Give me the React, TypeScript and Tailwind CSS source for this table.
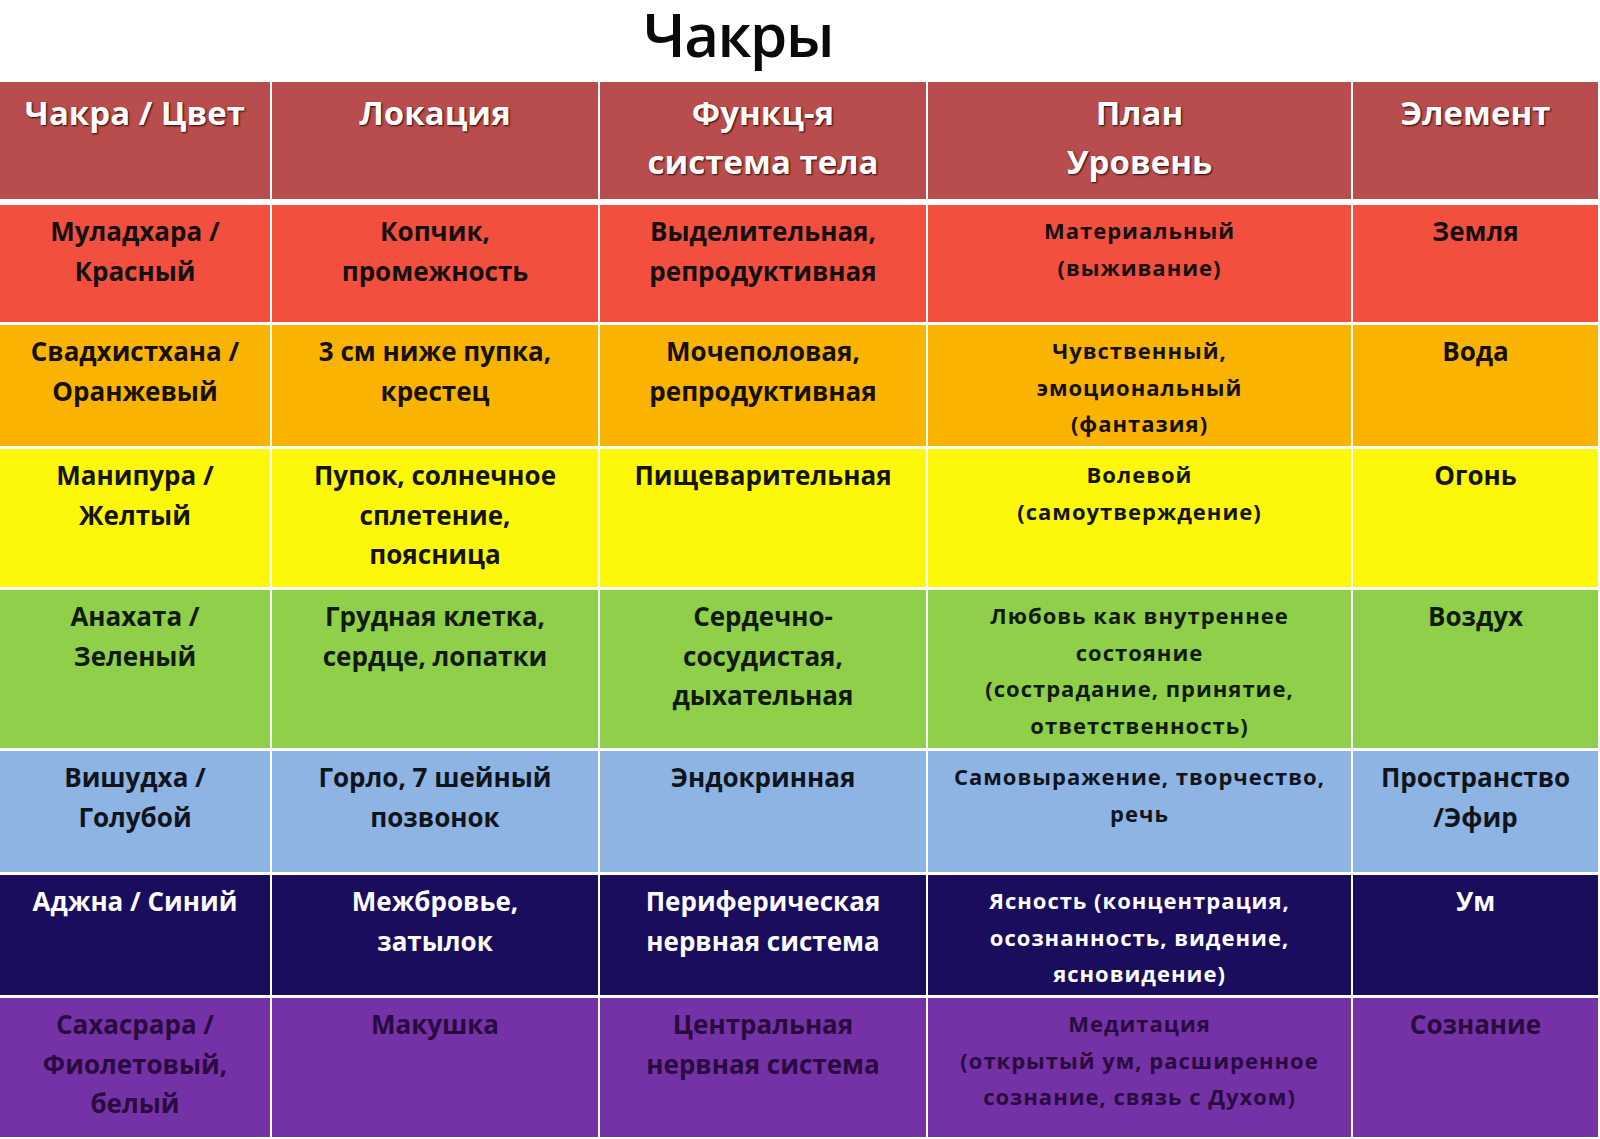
import React from "react"

type Row = {
  bg: string
  text: string
  h: string
  cells: string[][]
}

const headers = [["Чакра / Цвет"], ["Локация"], ["Функц-я", "система тела"], ["План", "Уровень"], ["Элемент"]]

const rows: Row[] = [
  {
    bg: "bg-[#f24f3f]",
    text: "text-[#141010]",
    h: "h-[117px]",
    cells: [
      ["Муладхара /", "Красный"],
      ["Копчик,", "промежность"],
      ["Выделительная,", "репродуктивная"],
      ["Материальный", "(выживание)"],
      ["Земля"],
    ],
  },
  {
    bg: "bg-[#f9b300]",
    text: "text-[#15110a]",
    h: "h-[121px]",
    cells: [
      ["Свадхистхана /", "Оранжевый"],
      ["3 см ниже пупка,", "крестец"],
      ["Мочеполовая,", "репродуктивная"],
      ["Чувственный,", "эмоциональный", "(фантазия)"],
      ["Вода"],
    ],
  },
  {
    bg: "bg-[#fdf80a]",
    text: "text-[#14140a]",
    h: "h-[138px]",
    cells: [
      ["Манипура /", "Желтый"],
      ["Пупок, солнечное", "сплетение,", "поясница"],
      ["Пищеварительная"],
      ["Волевой", "(самоутверждение)"],
      ["Огонь"],
    ],
  },
  {
    bg: "bg-[#8fcf4a]",
    text: "text-[#111a0c]",
    h: "h-[158px]",
    cells: [
      ["Анахата /", "Зеленый"],
      ["Грудная клетка,", "сердце, лопатки"],
      ["Сердечно-", "сосудистая,", "дыхательная"],
      ["Любовь как внутреннее", "состояние", "(сострадание, принятие,", "ответственность)"],
      ["Воздух"],
    ],
  },
  {
    bg: "bg-[#8db4e2]",
    text: "text-[#10141c]",
    h: "h-[121px]",
    cells: [
      ["Вишудха /", "Голубой"],
      ["Горло, 7 шейный", "позвонок"],
      ["Эндокринная"],
      ["Самовыражение, творчество,", "речь"],
      ["Пространство", "/Эфир"],
    ],
  },
  {
    bg: "bg-[#1b0d5e]",
    text: "text-white",
    h: "h-[120px]",
    cells: [
      ["Аджна / Синий"],
      ["Межбровье,", "затылок"],
      ["Периферическая", "нервная система"],
      ["Ясность (концентрация,", "осознанность, видение,", "ясновидение)"],
      ["Ум"],
    ],
  },
  {
    bg: "bg-[#7531a6]",
    text: "text-[#2a0b40]",
    h: "h-[139px]",
    cells: [
      ["Сахасрара /", "Фиолетовый,", "белый"],
      ["Макушка"],
      ["Центральная", "нервная система"],
      ["Медитация", "(открытый ум, расширенное", "сознание, связь с Духом)"],
      ["Сознание"],
    ],
  },
]

export default function App() {
  return (
    <div className="h-[1139px] w-[1600px] overflow-hidden bg-white font-['Open_Sans',sans-serif]">
      <div className="flex h-[82px] justify-center pr-[124px]">
        <h1 className="text-[60px] leading-[68px] font-semibold tracking-tight text-[#0a0a0a]">Чакры</h1>
      </div>

      <div className="grid grid-cols-[270px_326px_326px_423px_245px] gap-x-[2px] gap-y-[3px]">
        {headers.map((lines, i) => (
          <div
            key={i}
            className="mb-[3px] h-[117px] bg-[#b94d4d] pt-[6px] text-center text-[33px] leading-[49px] font-bold text-white [text-shadow:1px_1px_2px_#2a0505]"
          >
            {lines.map((l) => (
              <div key={l}>{l}</div>
            ))}
          </div>
        ))}

        {rows.map((row, ri) =>
          row.cells.map((lines, ci) => (
            <div
              key={`${ri}-${ci}`}
              className={`${row.bg} ${row.text} ${row.h} pt-[7px] text-center font-bold ${
                ci === 3 ? "text-[22px] leading-[36.5px] tracking-[1px]" : "text-[26px] leading-[39.5px]"
              }`}
            >
              {lines.map((l) => (
                <div key={l} className="whitespace-nowrap">
                  {l}
                </div>
              ))}
            </div>
          ))
        )}
      </div>
    </div>
  )
}
